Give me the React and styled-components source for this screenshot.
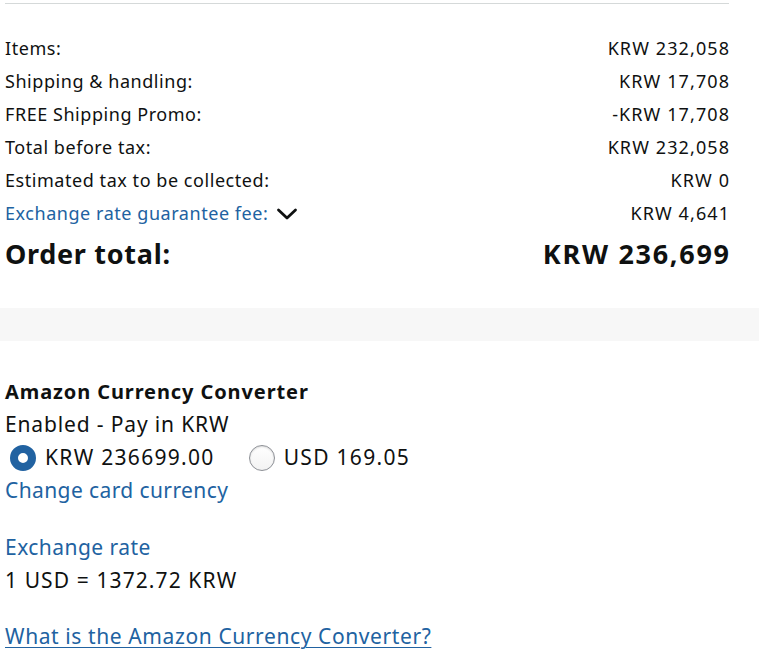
import React from "react";
import styled, { createGlobalStyle } from "styled-components";

const colours = {
  text: "#0f1111",
  link: "#2162a1",
  rule: "#d5d9d9",
  band: "#f7f7f7",
  radio: "#2162a1"
};

const GlobalStyle = createGlobalStyle`
  html, body {
    margin: 0;
    padding: 0;
    background: #fff;
  }
  body {
    font-family: "Noto Sans", "Open Sans", Arial, sans-serif;
    color: ${colours.text};
  }
`;

const Page = styled.div`
  width: 759px;
  overflow: hidden;
`;

const Summary = styled.div`
  margin: 3px 30px 0 5px;
  padding-top: 28px;
  border-top: 1px solid ${colours.rule};
`;

const Row = styled.div`
  display: flex;
  justify-content: space-between;
  align-items: center;
  font-size: 18px;
  line-height: 33px;
  height: 33px;
  letter-spacing: 0.55px;
`;

const Label = styled.span`
  display: inline-flex;
  align-items: center;
  gap: 8px;
  color: ${props => (props.link ? colours.link : colours.text)};
`;

// digits are a little wider in the original face
const Num = styled.span`
  letter-spacing: ${props => props.spacing || 1.1}px;
  margin-right: -${props => props.spacing || 1.1}px;
`;

const TotalRow = styled(Row)`
  font-size: 27px;
  font-weight: 700;
  height: 42px;
  line-height: 42px;
  margin-top: 3px;
  letter-spacing: 0.7px;
`;

const Band = styled.div`
  height: 33px;
  margin-top: 33px;
  background: ${colours.band};
`;

const Converter = styled.div`
  padding: 34px 30px 0 5px;
  font-size: 21px;
  line-height: 33px;
  letter-spacing: 0.6px;
`;

const Heading = styled.div`
  font-weight: 700;
  font-size: 20px;
  letter-spacing: 0.9px;
`;

const Status = styled.div`
  letter-spacing: 0.85px;
`;

const Options = styled.div`
  display: flex;
  align-items: center;
  gap: 34px;
  padding-left: 5px;
  letter-spacing: 1.3px;
`;

const Option = styled.label`
  display: inline-flex;
  align-items: center;
  gap: 9px;
`;

const Radio = styled.span`
  width: 26px;
  height: 26px;
  border-radius: 50%;
  box-sizing: border-box;
  display: inline-block;
  flex: none;
  ${props =>
    props.checked
      ? `background: #fff; border: 8px solid ${colours.radio};`
      : `background: linear-gradient(#fff, #f3f3f3); border: 1px solid #8d9096; box-shadow: inset 0 1px 2px rgba(0,0,0,0.15);`}
`;

const Link = styled.a`
  color: ${colours.link};
  text-decoration: ${props => (props.underline ? "underline" : "none")};
  text-underline-offset: 3px;
  text-decoration-thickness: 1px;
  display: block;
  letter-spacing: ${props => props.spacing || 0.6}px;
`;

const RateLine = styled.div`
  letter-spacing: 1.1px;
`;

const Gap = styled.div`
  height: ${props => props.size}px;
`;

const Chevron = () => (
  <svg width="22" height="14" viewBox="0 0 22 14" aria-hidden="true">
    <path d="M2.5 3 L11 11 L19.5 3" fill="none" stroke="#0f1111" strokeWidth="2.8" strokeLinecap="round" strokeLinejoin="round" />
  </svg>
);

const rows = [
  ["Items:", "KRW 232,058"],
  ["Shipping & handling:", "KRW 17,708"],
  ["FREE Shipping Promo:", "-KRW 17,708"],
  ["Total before tax:", "KRW 232,058"],
  ["Estimated tax to be collected:", "KRW 0"]
];

export default function App() {
  return (
    <Page>
      <GlobalStyle />
      <Summary>
        {rows.map(([label, value]) => (
          <Row key={label}>
            <Label>{label}</Label>
            <Num>{value}</Num>
          </Row>
        ))}
        <Row>
          <Label link>
            Exchange rate guarantee fee:
            <Chevron />
          </Label>
          <Num>KRW 4,641</Num>
        </Row>
        <TotalRow>
          <span>Order total:</span>
          <Num spacing={1.7}>KRW 236,699</Num>
        </TotalRow>
      </Summary>
      <Band />
      <Converter>
        <Heading>Amazon Currency Converter</Heading>
        <Status>Enabled - Pay in KRW</Status>
        <Options>
          <Option>
            <Radio checked />
            KRW 236699.00
          </Option>
          <Option>
            <Radio />
            USD 169.05
          </Option>
        </Options>
        <Link href="#" spacing={0.4}>Change card currency</Link>
        <Gap size={24} />
        <Link href="#" spacing={0.45}>Exchange rate</Link>
        <RateLine>1 USD = 1372.72 KRW</RateLine>
        <Gap size={23} />
        <Link href="#" underline>
          What is the Amazon Currency Converter?
        </Link>
      </Converter>
    </Page>
  );
}
